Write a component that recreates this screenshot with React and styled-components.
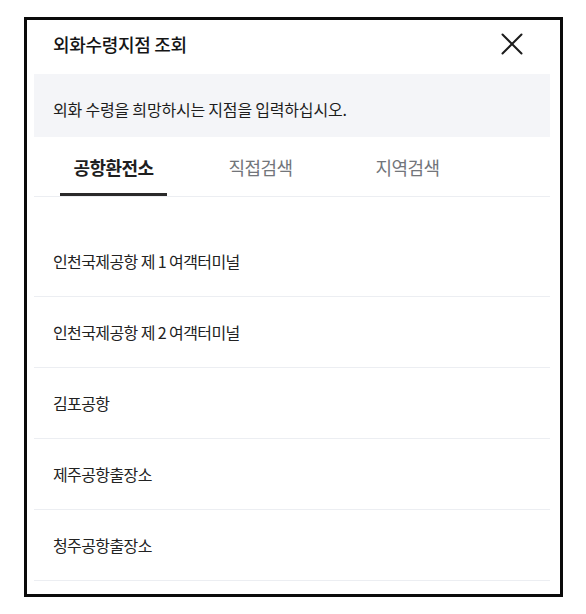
import React, { useState } from "react";
import styled, { createGlobalStyle } from "styled-components";

const GlobalStyle = createGlobalStyle`
  body {
    margin: 0;
    background: #ffffff;
    font-family: "Noto Sans CJK KR", "Noto Sans", sans-serif;
  }
`;

const Frame = styled.div`
  box-sizing: border-box;
  display: flex;
  flex-direction: column;
  width: 539px;
  height: 580px;
  margin: 17px 0 0 24px;
  padding: 0 10px 0 7px;
  border: 3px solid #0a0a0a;
  background: #ffffff;
`;

const Header = styled.div`
  align-items: center;
  display: flex;
  justify-content: space-between;
  height: 54px;
  padding: 0 27px 7px 19px;
  box-sizing: border-box;

  .title {
    color: #151515;
    font-size: 18px;
    letter-spacing: -0.3px;
    margin: 0;
    font-weight: 500;
  }
`;

const CloseButton = styled.button`
  background: none;
  border: none;
  display: flex;
  padding: 0;
  cursor: pointer;
`;

const Notice = styled.div`
  align-items: center;
  background: #f4f5f8;
  box-sizing: border-box;
  color: #1d1d1d;
  display: flex;
  font-size: 16px;
  letter-spacing: -0.2px;
  height: 63px;
  padding: 7px 19px 0;
`;

const TabBar = styled.div`
  border-bottom: 1px solid #eceef2;
  display: grid;
  grid-template-columns: repeat(3, 147px);
  height: 60px;
  box-sizing: border-box;
  padding-left: 6px;
`;

const Tab = styled.button`
  background: none;
  border: none;
  display: flex;
  justify-content: center;
  padding: 0;
  cursor: pointer;
  font-family: inherit;
`;

const TabLabel = styled.span`
  align-items: center;
  border-bottom: 3px solid ${(p) => (p.$active ? "#2a2a2a" : "transparent")};
  color: ${(p) => (p.$active ? "#1f1f1f" : "#72757a")};
  display: flex;
  font-size: 18px;
  font-weight: ${(p) => (p.$active ? 600 : 400)};
  letter-spacing: -0.6px;
  padding: 3px 14px 0;
`;

const List = styled.ul`
  list-style: none;
  margin: 0;
  padding: 29px 0 0;
`;

const Item = styled.li`
  align-items: center;
  border-bottom: 1px solid #eceef2;
  box-sizing: border-box;
  color: #222222;
  display: flex;
  font-size: 16px;
  letter-spacing: -0.6px;
  height: 71px;
  padding: 0 19px;
`;

const tabs = ["공항환전소", "직접검색", "지역검색"];

const branches = [
  "인천국제공항 제 1 여객터미널",
  "인천국제공항 제 2 여객터미널",
  "김포공항",
  "제주공항출장소",
  "청주공항출장소",
];

const App = () => {
  const [active, setActive] = useState(0);

  return (
    <>
      <GlobalStyle />
      <Frame>
        <Header>
          <p className="title">외화수령지점 조회</p>
          <CloseButton type="button" aria-label="닫기">
            <svg width="22" height="22" viewBox="0 0 22 22">
              <path
                d="M1.5 1.5 L20.5 20.5 M20.5 1.5 L1.5 20.5"
                stroke="#1c1c1c"
                strokeWidth="2"
                strokeLinecap="round"
              />
            </svg>
          </CloseButton>
        </Header>
        <Notice>외화 수령을 희망하시는 지점을 입력하십시오.</Notice>
        <TabBar>
          {tabs.map((t, i) => (
            <Tab key={t} type="button" onClick={() => setActive(i)}>
              <TabLabel $active={active === i}>{t}</TabLabel>
            </Tab>
          ))}
        </TabBar>
        <List>
          {branches.map((b) => (
            <Item key={b}>{b}</Item>
          ))}
        </List>
      </Frame>
    </>
  );
};

export default App;
